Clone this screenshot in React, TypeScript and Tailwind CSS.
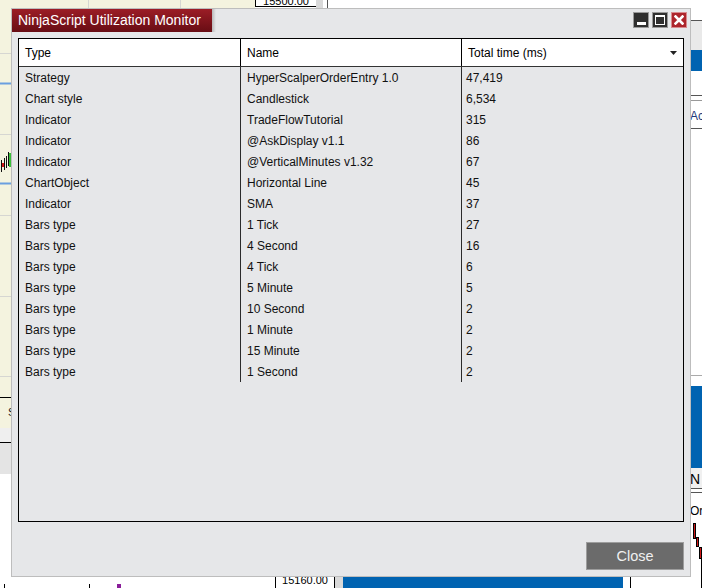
import React from 'react';

const rows: [string, string, string][] = [
  ['Strategy', 'HyperScalperOrderEntry 1.0', '47,419'],
  ['Chart style', 'Candlestick', '6,534'],
  ['Indicator', 'TradeFlowTutorial', '315'],
  ['Indicator', '@AskDisplay v1.1', '86'],
  ['Indicator', '@VerticalMinutes v1.32', '67'],
  ['ChartObject', 'Horizontal Line', '45'],
  ['Indicator', 'SMA', '37'],
  ['Bars type', '1 Tick', '27'],
  ['Bars type', '4 Second', '16'],
  ['Bars type', '4 Tick', '6'],
  ['Bars type', '5 Minute', '5'],
  ['Bars type', '10 Second', '2'],
  ['Bars type', '1 Minute', '2'],
  ['Bars type', '15 Minute', '2'],
  ['Bars type', '1 Second', '2'],
];

// price chart behind the dialog: gridlines, two SMA levels and a few candles
const ChartPane = () => (
  <svg width="255" height="397" className="block">
    <rect width="255" height="397" fill="#f4f3df" />
    {[53, 134, 215, 296, 376].map((y) => (
      <line key={y} x1="0" x2="255" y1={y + 0.5} y2={y + 0.5} stroke="#d6d6d2" />
    ))}
    {[88, 180].map((x) => (
      <line key={x} x1={x + 0.5} x2={x + 0.5} y1="0" y2="397" stroke="#d6d6d2" />
    ))}
    <line x1="0" x2="255" y1="83.5" y2="83.5" stroke="#6a9fe0" strokeWidth="2" />
    <line x1="0" x2="255" y1="183.5" y2="183.5" stroke="#6a9fe0" strokeWidth="2" />
    <line x1="1.5" x2="1.5" y1="160" y2="172" stroke="#111" />
    <rect x="2" y="163" width="2" height="4" fill="#d01818" />
    <line x1="4.5" x2="4.5" y1="158" y2="170" stroke="#111" />
    <line x1="6.5" x2="6.5" y1="156" y2="168" stroke="#111" />
    <line x1="8.5" x2="8.5" y1="152" y2="166" stroke="#111" />
    <rect x="9" y="153" width="3" height="14" fill="#39c03a" />
  </svg>
);

const WinButton = ({ kind }: { kind: 'min' | 'max' | 'close' }) => {
  if (kind === 'close') {
    return (
      <div className="w-[16px] h-[16px] bg-[#ad252c] border border-[#d98a8e] flex items-center justify-center">
        <svg width="10" height="10" viewBox="0 0 10 10">
          <path d="M1.5 1.5 L8.5 8.5 M8.5 1.5 L1.5 8.5" stroke="#fff" strokeWidth="2.6" strokeLinecap="square" />
        </svg>
      </div>
    );
  }
  return (
    <div className="w-[16px] h-[16px] bg-[#2f2f2f] border border-[#9a9a9a] flex items-center justify-center">
      {kind === 'min' ? (
        <div className="w-[9px] h-[3px] bg-white mt-[6px]" />
      ) : (
        <div className="w-[10px] h-[10px] border border-white border-t-2" />
      )}
    </div>
  );
};

export default function App() {
  return (
    <div className="relative w-[702px] h-[588px] overflow-hidden bg-white font-['Liberation_Sans',Arial,sans-serif] flex">
      {/* chart column */}
      <div className="w-[255px] flex flex-col">
        <ChartPane />
        <div className="h-[31px] bg-[#f4f3df] border-t border-black pl-[8px] pt-[9px] text-[11px] leading-none text-[#222]">
          Sim101
        </div>
        <div className="h-[14px] bg-[#efefef]" />
        <div className="h-[32px] bg-[#e4e4e4] border-t border-black" />
        <div className="flex-1 bg-white relative">
          <div className="absolute left-[4px] bottom-0 w-px h-[4px] bg-black" />
          <div className="absolute left-[89px] bottom-0 w-px h-[4px] bg-black" />
          <div className="absolute left-[117px] bottom-0 w-[4px] h-[4px] bg-[#8a1e9a]" />
        </div>
      </div>

      {/* price axis */}
      <div className="w-[88px] flex flex-col">
        <div className="flex h-[12px]">
          <div className="w-[61px] h-[7px] border-l border-b border-black overflow-hidden flex items-end justify-center">
            <span className="text-[11px] leading-none mb-[-1px] text-black">15500.00</span>
          </div>
          <div className="w-[7px] h-full bg-[#d9d9d9]" />
          <div className="w-[5px] h-full border-r border-[#555]" />
        </div>
        <div className="flex-1" />
        <div className="flex h-[12px]">
          <div className="w-[20px]" />
          <div className="w-[60px] border-l border-t border-r border-black flex justify-center">
            <span className="text-[11px] leading-none -mt-[2px] text-black">15160.00</span>
          </div>
          <div className="flex-1 bg-[#d9d9d9]" />
        </div>
      </div>

      {/* centre panel */}
      <div className="w-[347px] flex flex-col">
        <div className="flex-1" />
        <div className="h-[12px] flex">
          <div className="w-[280px] bg-[#0063b1]" />
          <div className="w-[7px]" />
          <div className="flex-1 border-l border-black" />
        </div>
      </div>

      {/* chart trader side panel */}
      <div className="w-[12px] flex flex-col text-[12px] leading-none">
        <div className="h-[21px] shrink-0 border-b border-[#555]" />
        <div className="h-[29px] shrink-0 bg-[#e9e9e9]" />
        <div className="h-[21px] shrink-0 bg-[#0063b1]" />
        <div className="h-[25px] shrink-0 border-b border-[#555]" />
        <div className="h-[5px] shrink-0 border-b border-[#999]" />
        <div className="h-[28px] shrink-0 border-b border-[#555] pt-[9px] text-[#1f3a7a] whitespace-nowrap">Account</div>
        <div className="h-[247px] shrink-0 border-b border-[#aaa]" />
        <div className="h-[10px] shrink-0" />
        <div className="h-[82px] shrink-0 bg-[#0063b1]" />
        <div className="h-[21px] shrink-0 bg-[#f0f0f0] border-b border-[#555] pt-[4px] text-[14px] whitespace-nowrap">N</div>
        <div className="h-[4px] shrink-0 border-b border-[#555]" />
        <div className="flex-1 relative pt-[12px] whitespace-nowrap text-[12px]">
          Order
          <div className="absolute left-[3px] top-[30px] w-[3px] h-[16px] bg-[#d01818] border border-black" />
          <div className="absolute left-[6px] top-[44px] w-[3px] h-[10px] bg-[#d01818] border border-black" />
          <div className="absolute left-[9px] top-[54px] w-[3px] h-[12px] bg-[#d01818] border border-black" />
          <div className="absolute right-0 top-[62px] w-px h-[60px] bg-black" />
        </div>
      </div>

      {/* utilization monitor window */}
      <div className="absolute left-[11px] top-[8px] w-[680px] h-[569px] border border-[#bdbdbd] bg-[#e6e7e9] flex flex-col">
        <div className="h-[24px] flex items-start justify-between shrink-0">
          <div className="flex h-[23px]">
            <div className="w-[200px] h-full bg-gradient-to-b from-[#9c1d26] to-[#680d14] text-white text-[14px] leading-none pl-[6px] pt-[4px] whitespace-nowrap">
              NinjaScript Utilization Monitor
            </div>
            <div className="w-[4px] h-full bg-gradient-to-r from-[#9a9a9a] to-transparent opacity-60" />
          </div>
          <div className="flex gap-[3px] pt-[3px] pr-[3px]">
            <WinButton kind="min" />
            <WinButton kind="max" />
            <WinButton kind="close" />
          </div>
        </div>

        <div className="px-[6px] pt-[5px] flex flex-col flex-1">
          <div className="w-[666px] h-[484px] border border-black flex flex-col text-[12px] leading-none text-[#111]">
            <div className="h-[28px] bg-white border-b border-[#333] grid grid-cols-[222px_221px_1fr] shrink-0 text-black">
              <div className="border-r border-black flex items-center pl-[6px]">Type</div>
              <div className="border-r border-black flex items-center pl-[6px]">Name</div>
              <div className="flex items-center justify-between pl-[6px] pr-[6px]">
                <span>Total time (ms)</span>
                <svg width="7" height="4" viewBox="0 0 7 4">
                  <path d="M0 0 H7 L3.5 4 Z" fill="#222" />
                </svg>
              </div>
            </div>
            {rows.map(([type, name, time], i) => (
              <div key={i} className="h-[21px] grid grid-cols-[222px_221px_1fr] shrink-0">
                <div className="border-r border-[#2b2b2b] flex items-center pl-[6px]">{type}</div>
                <div className="border-r border-[#2b2b2b] flex items-center pl-[6px]">{name}</div>
                <div className="flex items-center pl-[4px]">{time}</div>
              </div>
            ))}
          </div>

          <div className="flex justify-end mt-[20px]">
            <button className="w-[98px] h-[28px] bg-[#6b6b6b] border border-[#9d9d9d] text-[#f0f0f0] text-[14.5px] leading-none">
              Close
            </button>
          </div>
        </div>
      </div>
    </div>
  );
}
